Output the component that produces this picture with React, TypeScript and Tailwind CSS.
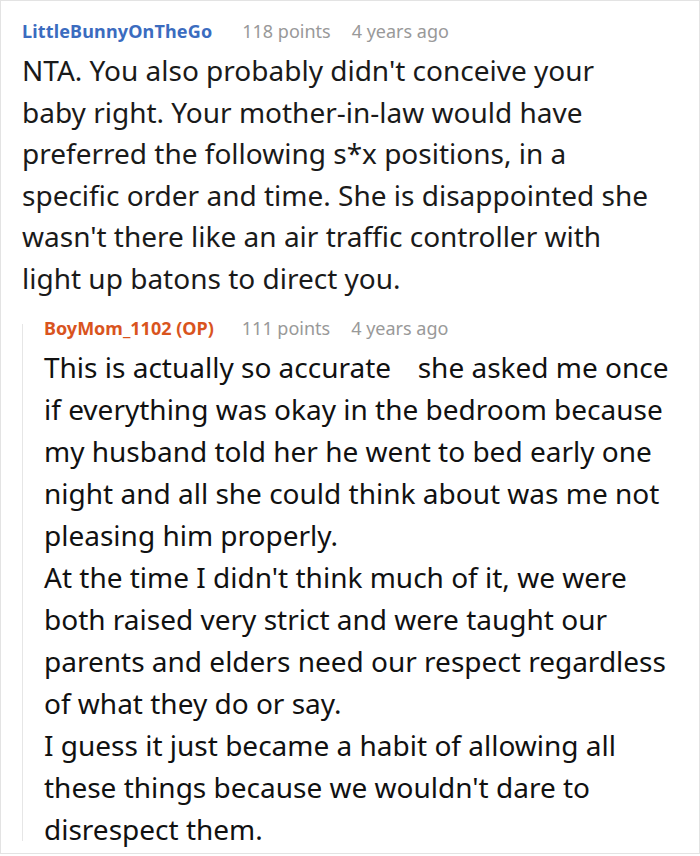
import React from 'react';

type Comment = {
  author: string;
  points: string;
  age: string;
  lines: React.ReactNode[];
};

const parent: Comment = {
  author: 'LittleBunnyOnTheGo',
  points: '118 points',
  age: '4 years ago',
  lines: [
    'NTA. You also probably didn\'t conceive your',
    'baby right. Your mother-in-law would have',
    'preferred the following s*x positions, in a',
    'specific order and time. She is disappointed she',
    'wasn\'t there like an air traffic controller with',
    'light up batons to direct you.',
  ],
};

const reply: Comment = {
  author: 'BoyMom_1102 (OP)',
  points: '111 points',
  age: '4 years ago',
  lines: [
    <>
      This is actually so accurate <span className="inline-block w-[12px]" /> she asked me once
    </>,
    'if everything was okay in the bedroom because',
    'my husband told her he went to bed early one',
    'night and all she could think about was me not',
    'pleasing him properly.',
    'At the time I didn\'t think much of it, we were',
    'both raised very strict and were taught our',
    'parents and elders need our respect regardless',
    'of what they do or say.',
    'I guess it just became a habit of allowing all',
    'these things because we wouldn\'t dare to',
    'disrespect them.',
  ],
};

const Meta = ({ c, nameClass, gap }: { c: Comment; nameClass: string; gap: string }) => (
  <div className="flex items-center h-6 text-[18px] leading-6">
    <span className={`font-bold ${nameClass}`}>{c.author}</span>
    <span className={`${gap} text-[#999999]`}>{c.points}</span>
    <span className="ml-[21px] text-[#999999]">{c.age}</span>
  </div>
);

export default function App() {
  return (
    <div className="w-[700px] h-[856px] bg-white font-['Noto_Sans',sans-serif]">
      <div className="h-[854px] border border-[#e3e3e3] pl-[21px] pt-[18px] overflow-hidden">
        <Meta c={parent} nameClass="text-[#3b6cbf] tracking-[0.15px]" gap="ml-[30px]" />
        <div className="mt-[7px] text-[28px] leading-[41.5px] text-[#1a1a1a]">
          {parent.lines.map((l, i) => (
            <div key={i} className="whitespace-nowrap">{l}</div>
          ))}
        </div>

        <div className="mt-[17px] ml-0 flex">
          <div className="w-px bg-[#e6e6e6] mt-[8px] mb-[9px]" />
          <div className="pl-[21px]">
            <Meta c={reply} nameClass="text-[#d9541e]" gap="ml-[28px]" />
            <div className="mt-[6px] text-[28px] leading-[42px] text-[#111111] [font-stretch:semi-condensed]">
              {reply.lines.map((l, i) => (
                <div key={i} className="whitespace-nowrap">{l}</div>
              ))}
            </div>
          </div>
        </div>
      </div>
    </div>
  );
}
